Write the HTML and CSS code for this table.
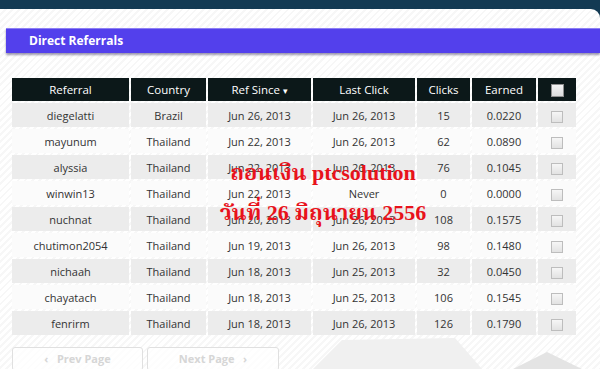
FILE: index.html
```html
<!DOCTYPE html>
<html>
<head>
<meta charset="utf-8">
<link rel="stylesheet" href="styles.css">
</head>
<body>
<div class="panel">
  <svg class="deco" width="600" height="360" viewBox="0 0 600 360">
    <polygon points="313,360 342,331 455,329 482,360" fill="#f0f0f0"/>
    <polygon points="513,360 547,343 582,360" fill="#e4e4e4"/>
  </svg>
  <div class="titlebar">Direct Referrals</div>
  <table class="refs">
    <thead>
      <tr>
        <th class="c-ref">Referral</th>
        <th class="c-country">Country</th>
        <th class="c-since">Ref Since <span class="arrow">▾</span></th>
        <th class="c-last">Last Click</th>
        <th class="c-clicks">Clicks</th>
        <th class="c-earned">Earned</th>
        <th class="c-check"><span class="cb cb-head"></span></th>
      </tr>
    </thead>
    <tbody>
      <tr><td>diegelatti</td><td>Brazil</td><td>Jun 26, 2013</td><td>Jun 26, 2013</td><td>15</td><td>0.0220</td><td><span class="cb"></span></td></tr>
      <tr><td>mayunum</td><td>Thailand</td><td>Jun 22, 2013</td><td>Jun 26, 2013</td><td>62</td><td>0.0890</td><td><span class="cb"></span></td></tr>
      <tr><td>alyssia</td><td>Thailand</td><td>Jun 22, 2013</td><td>Jun 26, 2013</td><td>76</td><td>0.1045</td><td><span class="cb"></span></td></tr>
      <tr><td>winwin13</td><td>Thailand</td><td>Jun 22, 2013</td><td>Never</td><td>0</td><td>0.0000</td><td><span class="cb"></span></td></tr>
      <tr><td>nuchnat</td><td>Thailand</td><td>Jun 20, 2013</td><td>Jun 26, 2013</td><td>108</td><td>0.1575</td><td><span class="cb"></span></td></tr>
      <tr><td>chutimon2054</td><td>Thailand</td><td>Jun 19, 2013</td><td>Jun 26, 2013</td><td>98</td><td>0.1480</td><td><span class="cb"></span></td></tr>
      <tr><td>nichaah</td><td>Thailand</td><td>Jun 18, 2013</td><td>Jun 25, 2013</td><td>32</td><td>0.0450</td><td><span class="cb"></span></td></tr>
      <tr><td>chayatach</td><td>Thailand</td><td>Jun 18, 2013</td><td>Jun 25, 2013</td><td>106</td><td>0.1545</td><td><span class="cb"></span></td></tr>
      <tr><td>fenrirm</td><td>Thailand</td><td>Jun 18, 2013</td><td>Jun 26, 2013</td><td>126</td><td>0.1790</td><td><span class="cb"></span></td></tr>
    </tbody>
  </table>
  <div class="pager">
    <div class="btn">‹&nbsp;&nbsp;&nbsp;Prev Page</div>
    <div class="btn">Next Page&nbsp;&nbsp;&nbsp;›</div>
  </div>
  <div class="stamp">
    <div class="stamp-line">ถอนเงิน ptcsolution</div>
    <div class="stamp-line">วันที่ 26 มิถุนายน 2556</div>
  </div>
</div>
</body>
</html>
```

FILE: styles.css
```css
html, body {
  margin: 0;
  padding: 0;
}
body {
  background: #133a53;
  width: 600px;
  height: 369px;
  overflow: hidden;
  font-family: "Open Sans", "DejaVu Sans", sans-serif;
}
.panel {
  position: relative;
  margin-top: 9px;
  height: 360px;
  border-top-right-radius: 9px;
  overflow: hidden;
  background: repeating-linear-gradient(135deg, #ffffff 0 3px, #f7f7f7 3px 5px);
}
.deco {
  position: absolute;
  left: 0;
  top: 0;
}
.titlebar {
  position: relative;
  margin: 19px 0 0 6px;
  height: 25px;
  box-sizing: border-box;
  padding-left: 23px;
  background: #5340ec;
  border-top: 1px solid #8d7ff4;
  box-shadow: 0 2px 2px rgba(40, 30, 80, 0.45);
  color: #ffffff;
  font-weight: bold;
  font-size: 12px;
  line-height: 24px;
}
.refs {
  position: relative;
  margin: 23px 0 0 10px;
  border-collapse: separate;
  border-spacing: 2px;
  table-layout: fixed;
  font-size: 11px;
  color: #333333;
}
.refs th {
  background: #0c1819;
  color: #ffffff;
  font-weight: normal;
  font-size: 11.5px;
  height: 23px;
  padding: 0;
  text-align: center;
}
.refs td {
  height: 24px;
  padding: 0;
  text-align: center;
  background: #fbfbfb;
}
.refs tbody tr:nth-child(odd) td {
  background: #ececec;
}
.arrow {
  font-size: 9px;
}
.c-ref { width: 117px; }
.c-country { width: 75px; }
.c-since { width: 103px; }
.c-last { width: 102px; }
.c-clicks { width: 53px; }
.c-earned { width: 64px; }
.c-check { width: 38px; }
.cb {
  display: inline-block;
  width: 10px;
  height: 10px;
  border: 1px solid #bdbdbd;
  background: linear-gradient(#f6f6f6, #e2e2e2);
  vertical-align: middle;
}
.cb-head {
  width: 11px;
  height: 11px;
  border-color: #8f8f8f;
  background: linear-gradient(#f4f4f4, #dcdcdc);
}
.pager {
  position: relative;
  display: flex;
  gap: 4px;
  margin: 10px 0 0 12px;
}
.btn {
  height: 24px;
  box-sizing: border-box;
  border: 1px solid #e0e0e0;
  border-radius: 3px;
  background: rgba(255, 255, 255, 0.7);
  color: #d6d6d6;
  font-weight: bold;
  font-size: 11px;
  line-height: 22px;
  text-align: center;
}
.btn:first-child { width: 131px; }
.btn:last-child { width: 132px; }
.stamp {
  position: absolute;
  left: 173px;
  top: 153px;
  width: 300px;
  display: flex;
  flex-direction: column;
  gap: 18px;
  color: #e8121b;
  font-family: "Liberation Serif", "Noto Serif Thai", "Noto Sans Thai", serif;
  font-weight: bold;
  font-size: 22px;
  line-height: 22px;
  text-align: center;
}
```
